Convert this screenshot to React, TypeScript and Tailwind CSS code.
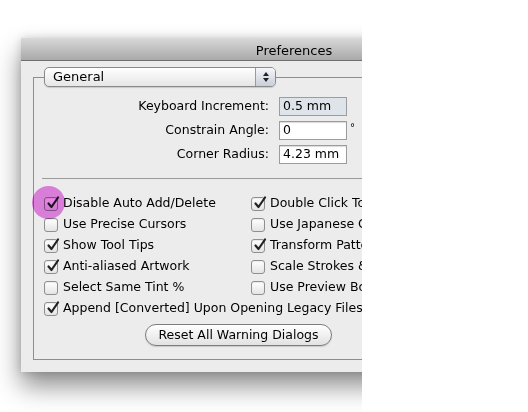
import React from 'react';

const font = { fontFamily: '"DejaVu Sans", "Liberation Sans", sans-serif' };

function Check({ checked }: { checked?: boolean }) {
  return (
    <span className="relative inline-flex h-[14px] w-[14px] shrink-0 items-center justify-center rounded-[3px] border border-[#8f8f8f] bg-gradient-to-b from-white to-[#e4e4e4] shadow-[inset_0_1px_1px_rgba(0,0,0,0.08)]">
      {checked && (
        <svg viewBox="0 0 14 14" className="absolute -top-[2px] left-[1px] h-[14px] w-[14px]">
          <path d="M2.5 7.5 L5.5 11 L12 1.5" fill="none" stroke="#222" strokeWidth="2.2" strokeLinecap="round" strokeLinejoin="round" />
        </svg>
      )}
    </span>
  );
}

function Option({ label, checked }: { label: string; checked?: boolean }) {
  return (
    <div className="flex h-[21px] items-center gap-[5px] whitespace-nowrap text-[12.5px] text-black">
      <Check checked={checked} />
      <span>{label}</span>
    </div>
  );
}

export default function App() {
  return (
    <div className="h-[412px] w-[528px] bg-white" style={font}>
      {/* window, cropped on the right */}
      <div className="h-full w-[362px] overflow-hidden pl-[21px] pt-[38px]">
        <div className="flex h-[334px] w-[546px] flex-col bg-[#ececec] shadow-[0_14px_24px_rgba(0,0,0,0.45),0_0_8px_rgba(0,0,0,0.15)]">
          {/* title bar */}
          <div className="flex h-[23px] items-center justify-center border-b border-[#6f6f6f] bg-gradient-to-b from-[#d9d9d9] to-[#a9a9a9] pt-[3px] text-[13px] text-black">
            Preferences
          </div>

          <div className="flex-1 px-[12px] pb-[12px] pt-[16px]">
            <div className="relative h-full border-l border-t border-b border-[#8e8e8e] pl-[8px] pt-[19px]">
              {/* section menu over the box edge */}
              <div className="absolute -top-[11px] left-[10px] flex h-[20px] w-[232px] items-stretch overflow-hidden rounded-[5px] border border-[#8a8a8a] bg-gradient-to-b from-white to-[#e6e6e6] shadow-[0_1px_1px_rgba(0,0,0,0.15)]">
                <div className="flex flex-1 items-center pl-[8px] text-[13px] text-black">General</div>
                <div className="flex w-[20px] flex-col items-center justify-center gap-[2px] border-l border-[#9a9a9a] bg-gradient-to-b from-[#f4f6fa] to-[#c9ced8]">
                  <span className="h-0 w-0 border-x-[3px] border-b-[4px] border-x-transparent border-b-[#222]" />
                  <span className="h-0 w-0 border-x-[3px] border-t-[4px] border-x-transparent border-t-[#222]" />
                </div>
              </div>

              {/* numeric fields */}
              <div className="grid grid-cols-[227px_68px_12px] items-center gap-x-[10px] gap-y-[5px] text-[12.5px] text-black">
                <span className="text-right">Keyboard Increment:</span>
                <div className="flex h-[19px] items-center border border-[#9c9c9c] bg-[#dfe4ea] pl-[3px]">0.5 mm</div>
                <span />
                <span className="text-right">Constrain Angle:</span>
                <div className="flex h-[19px] items-center border border-[#9c9c9c] bg-white pl-[3px] shadow-[inset_0_1px_1px_rgba(0,0,0,0.15)]">0</div>
                <span className="-ml-[7px] -mt-[6px] text-[10px]">°</span>
                <span className="text-right">Corner Radius:</span>
                <div className="flex h-[19px] items-center border border-[#9c9c9c] bg-white pl-[3px] shadow-[inset_0_1px_1px_rgba(0,0,0,0.15)]">4.23 mm</div>
                <span />
              </div>

              <div className="mt-[14px] h-px bg-[#9a9a9a]" />

              {/* options */}
              <div className="relative mt-[14px] pl-[2px]">
                <div className="grid grid-cols-[210px_200px]">
                  <div>
                    <Option label="Disable Auto Add/Delete" checked />
                    <Option label="Use Precise Cursors" />
                    <Option label="Show Tool Tips" checked />
                    <Option label="Anti-aliased Artwork" checked />
                    <Option label="Select Same Tint %" />
                  </div>
                  <div className="-ml-[3px]">
                    <Option label="Double Click To Isolate" checked />
                    <Option label="Use Japanese Crop Marks" />
                    <Option label="Transform Pattern Tiles" checked />
                    <Option label="Scale Strokes & Effects" />
                    <Option label="Use Preview Bounds" />
                  </div>
                </div>
                <Option label="Append [Converted] Upon Opening Legacy Files" checked />
                {/* highlight marker */}
                <span className="absolute -left-[10px] -top-[7px] h-[33px] w-[33px] rounded-full bg-[#ea88ea] mix-blend-multiply" />
              </div>

              <div className="mt-[5px] flex justify-center pr-[120px]">
                <button className="h-[22px] rounded-full border border-[#7d7d7d] bg-gradient-to-b from-white to-[#e2e2e2] px-[12px] text-[12.5px] text-black shadow-[0_1px_1px_rgba(0,0,0,0.15)]">
                  Reset All Warning Dialogs
                </button>
              </div>
            </div>
          </div>
        </div>
      </div>
    </div>
  );
}
